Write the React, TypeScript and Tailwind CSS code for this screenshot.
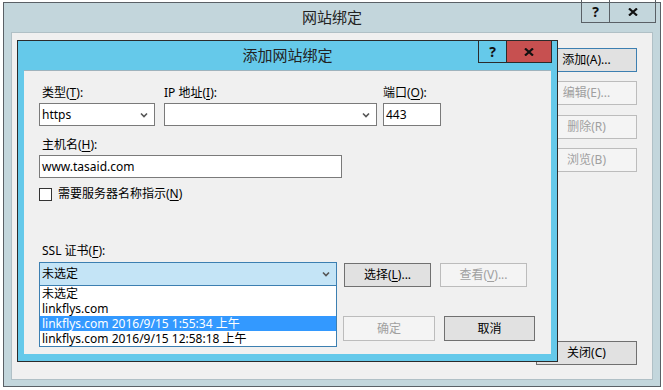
import { ReactNode } from "react";

const font = { fontFamily: '"Noto Sans", "Noto Sans CJK SC", sans-serif' };

function Key({ children }: { children: ReactNode }) {
  return <span className="underline underline-offset-2">{children}</span>;
}

function Chevron() {
  return (
    <svg width="8" height="6" viewBox="0 0 8 6" className="shrink-0">
      <polyline points="1,1.5 4,4.5 7,1.5" fill="none" stroke="#555" strokeWidth="1.6" />
    </svg>
  );
}

function CloseGlyph({ size = 10 }: { size?: number }) {
  return (
    <svg width={size} height={size - 2} viewBox="0 0 10 8">
      <path d="M1 0.5 L9 7.5 M9 0.5 L1 7.5" stroke="#111" strokeWidth="2.2" />
    </svg>
  );
}

function Btn({
  children,
  disabled,
  focused,
  className,
}: {
  children: ReactNode;
  disabled?: boolean;
  focused?: boolean;
  className: string;
}) {
  const look = disabled
    ? "border-[#bcbcbc] bg-[#f4f4f4] text-[#a0a0a0]"
    : focused
      ? "border-[#3c7fb1] bg-[#e1e1e1] text-black"
      : "border-[#707070] bg-[#e1e1e1] text-black";
  return (
    <div className={`flex items-center justify-center border text-[12px] ${look} ${className}`}>
      {children}
    </div>
  );
}

function Label({ children, className = "" }: { children: ReactNode; className?: string }) {
  return <div className={`h-[16px] text-[12px] leading-[16px] text-black ${className}`}>{children}</div>;
}

function AddBindingDialog() {
  return (
    <div className="absolute left-[17px] top-[40px] flex h-[322px] w-[541px] flex-col border border-[#2b2b2b] bg-[#65c9ea] px-[6px] pb-[7px]">
      <div className="relative flex h-[29px] shrink-0 items-center justify-center text-[15px] text-[#222]">
        添加网站绑定
        <div className="absolute right-[-1px] top-[-1px] flex h-[23px] border border-[#2b2b2b]">
          <div className="flex w-[27px] items-center justify-center text-[14px] font-bold leading-none text-[#111]">?</div>
          <div className="flex w-[45px] items-center justify-center border-l border-[#2b2b2b] bg-[#c75050]">
            <CloseGlyph />
          </div>
        </div>
      </div>

      <div className="flex-1 border-t border-[#9fb3bd] bg-[#f0f0f0] pl-[15px] pt-[14px]">
        <div className="flex">
          <div className="w-[116px]">
            <Label className="pl-[3px]">
              类型(<Key>T</Key>):
            </Label>
            <div className="mt-[2px] flex h-[23px] items-center justify-between border border-[#7a7a7a] bg-white pl-[2px] pr-[6px] text-[12px]">
              https
              <Chevron />
            </div>
          </div>
          <div className="ml-[9px] w-[213px]">
            <Label>
              IP 地址(<Key>I</Key>):
            </Label>
            <div className="mt-[2px] flex h-[23px] items-center justify-end border border-[#7a7a7a] bg-white pr-[6px]">
              <Chevron />
            </div>
          </div>
          <div className="ml-[6px] w-[58px]">
            <Label>
              端口(<Key>O</Key>):
            </Label>
            <div className="mt-[2px] flex h-[23px] items-center border border-[#7a7a7a] bg-white pl-[2px] text-[12px]">
              443
            </div>
          </div>
        </div>

        <Label className="mt-[11px] pl-[3px]">
          主机名(<Key>H</Key>):
        </Label>
        <div className="mt-[2px] flex h-[23px] w-[303px] items-center border border-[#7a7a7a] bg-white pl-[2px] text-[12px]">
          www.tasaid.com
        </div>

        <div className="mt-[8px] flex h-[16px] items-center">
          <div className="h-[13px] w-[13px] border border-[#333] bg-white" />
          <span className="ml-[6px] text-[12px] leading-[16px]">
            需要服务器名称指示(<Key>N</Key>)
          </span>
        </div>

        <Label className="mt-[41px] pl-[3px]">
          SSL 证书(<Key>F</Key>):
        </Label>
        <div className="mt-[3px] flex items-start">
          <div className="relative w-[298px]">
            <div className="flex h-[24px] items-center justify-between border border-[#3c7fb1] bg-[#c4e4f6] pl-[2px] pr-[6px] text-[12px]">
              未选定
              <Chevron />
            </div>
            <div className="absolute left-0 top-full z-10 w-full border-x border-b border-[#3c7fb1] bg-white text-[12px]">
              <div className="h-[15px] pl-[2px] leading-[15px]">未选定</div>
              <div className="h-[15px] pl-[2px] leading-[15px]">linkflys.com</div>
              <div className="h-[15px] bg-[#3399ff] pl-[2px] leading-[15px] text-white">
                linkflys.com 2016/9/15 1:55:34 上午
              </div>
              <div className="h-[15px] pl-[2px] leading-[15px]">linkflys.com 2016/9/15 12:58:18 上午</div>
            </div>
          </div>
          <Btn className="ml-[7px] mt-[1px] h-[24px] w-[87px]">
            选择(<Key>L</Key>)...
          </Btn>
          <Btn disabled className="ml-[9px] mt-[1px] h-[24px] w-[87px]">
            查看(<Key>V</Key>)...
          </Btn>
        </div>

        <div className="mt-[29px] flex justify-end pr-[16px]">
          <Btn disabled className="h-[25px] w-[92px]">
            确定
          </Btn>
          <Btn className="ml-[9px] h-[25px] w-[91px]">取消</Btn>
        </div>
      </div>
    </div>
  );
}

export default function App() {
  return (
    <div className="relative h-[390px] w-[663px] overflow-hidden bg-white text-black" style={font}>
      <div className="ml-[3px] mt-[2px] flex h-[385px] w-[658px] flex-col border border-[#5a6066] bg-[#c3d6dc] px-[7px] pb-[6px]">
        <div className="relative flex h-[29px] shrink-0 items-center justify-center text-[15px] text-[#222]">
          网站绑定
          <div className="absolute right-[-3px] top-[-4px] flex h-[24px] border border-[#5a6066]">
            <div className="flex w-[27px] items-center justify-center pt-[2px] text-[14px] font-bold leading-none text-[#111]">?</div>
            <div className="flex w-[46px] items-center justify-center border-l border-[#5a6066] pt-[2px]">
              <CloseGlyph />
            </div>
          </div>
        </div>
        <div className="flex flex-1 flex-col items-end border border-[#b0c0c6] bg-[#f0f0f0] pb-[14px] pr-[15px] pt-[15px]">
          <Btn focused className="h-[24px] w-[101px]">
            添加(A)...
          </Btn>
          <Btn disabled className="mt-[9px] h-[24px] w-[101px]">
            编辑(E)...
          </Btn>
          <Btn disabled className="mt-[10px] h-[24px] w-[101px]">
            删除(R)
          </Btn>
          <Btn disabled className="mt-[9px] h-[24px] w-[101px]">
            浏览(B)
          </Btn>
          <Btn className="mt-auto h-[24px] w-[101px]">关闭(C)</Btn>
        </div>
      </div>
      <AddBindingDialog />
    </div>
  );
}
